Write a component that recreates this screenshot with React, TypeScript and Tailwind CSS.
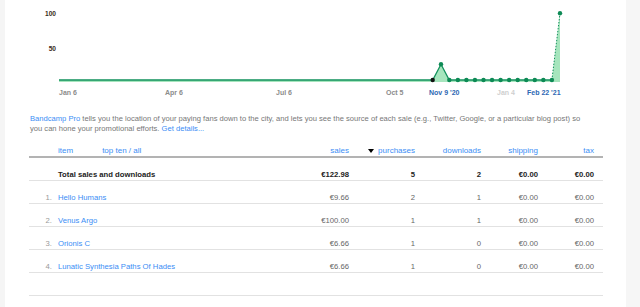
import React from 'react';

const rows = [
  { n: 1, name: 'Hello Humans', sales: '€9.66', purchases: '2', downloads: '1' },
  { n: 2, name: 'Venus Argo', sales: '€100.00', purchases: '1', downloads: '1' },
  { n: 3, name: 'Orionis C', sales: '€6.66', purchases: '1', downloads: '0' },
  { n: 4, name: 'Lunatic Synthesia Paths Of Hades', sales: '€6.66', purchases: '1', downloads: '0' },
];

const dotXs = Array.from({ length: 13 }, (_, i) => 449.3 + i * 8.55);

const Chart: React.FC = () => {
  const lastX = dotXs[dotXs.length - 1];
  return (
    <svg width="621" height="100" viewBox="5 0 621 100" className="block">
      <text x="56" y="15.5" textAnchor="end" fontSize="6.6" fontWeight="700" fill="#3a2a1a" fontFamily="Liberation Sans, Arial, sans-serif">100</text>
      <text x="56" y="50.5" textAnchor="end" fontSize="6.6" fontWeight="700" fill="#3a2a1a" fontFamily="Liberation Sans, Arial, sans-serif">50</text>

      {/* area */}
      <polygon
        points={`59,80 432.7,80 441,64.3 449.3,80 ${lastX},80 560,13.3 560,82 59,82`}
        fill="#a6e5bd"
      />
      {/* solid line */}
      <polyline
        points={`59,80 432.7,80 441,64.3 449.3,80 ${lastX},80`}
        fill="none"
        stroke="#12915c"
        strokeWidth="1.3"
      />
      {/* dashed last segment */}
      <line x1={lastX} y1="80" x2="560" y2="13.3" stroke="#12915c" strokeWidth="1" strokeDasharray="1.5 1.5" />

      <circle cx="432.7" cy="80" r="2.2" fill="#111" />
      <circle cx="441" cy="64.3" r="2.2" fill="#0d8a55" />
      {dotXs.map((x) => (
        <circle key={x} cx={x} cy="80" r="2.2" fill="#0d8a55" />
      ))}
      <circle cx="560" cy="13.3" r="2.2" fill="#0d8a55" />

      <g fontFamily="Liberation Sans, Arial, sans-serif" fontSize="7" fontWeight="700">
        <text x="59" y="94.5" fill="#8c8c8c">Jan 6</text>
        <text x="165" y="94.5" fill="#8c8c8c">Apr 6</text>
        <text x="276" y="94.5" fill="#8c8c8c">Jul 6</text>
        <text x="386" y="94.5" fill="#8c8c8c">Oct 5</text>
        <text x="429" y="94.5" fill="#2d67b3">Nov 9 '20</text>
        <text x="497" y="94.5" fill="#cfcfcf">Jan 4</text>
        <text x="527" y="94.5" fill="#2d67b3">Feb 22 '21</text>
      </g>
    </svg>
  );
};

const cols = 'grid grid-cols-[26px_245px_49px_66px_66px_57px_56px_9px]';

const App: React.FC = () => {
  return (
    <div className="flex w-[640px] h-[307px] bg-white font-['Liberation_Sans',Arial,sans-serif] overflow-hidden">
      <div className="w-[5px] bg-[#f5f5f5]" />

      <div className="flex-1">
        <Chart />

        {/* Pro blurb */}
        <p className="mt-[14px] ml-[25px] w-[564px] text-[7.6px] leading-[10px] text-[#777]">
          <a className="text-[#3b8ef5]">Bandcamp Pro</a> tells you the location of your paying fans down to the city, and lets you see the source of each sale (e.g., Twitter, Google, or a particular blog post) so you can hone your promotional efforts.{' '}
          <a className="text-[#3b8ef5]">Get details...</a>
        </p>

        {/* Table */}
        <div className="mt-[12px] ml-[24px] w-[574px]">
          <div className={`${cols} h-[12px] border-b-2 border-[#b3b3b3] text-[8px] leading-[10px] text-[#3b8ef5]`}>
            <div />
            <div className="pl-[3px] flex gap-[29px]">
              <span>item</span>
              <span>top ten / all</span>
            </div>
            <div className="text-right">sales</div>
            <div className="flex items-center justify-end gap-[4px]">
              <span className="inline-block w-0 h-0 border-l-[3px] border-r-[3px] border-t-[4px] border-l-transparent border-r-transparent border-t-black" />
              <span>purchases</span>
            </div>
            <div className="text-right">downloads</div>
            <div className="text-right">shipping</div>
            <div className="text-right">tax</div>
            <div />
          </div>

          <div className={`${cols} h-[23px] pt-[12px] border-b border-[#e2e2e2] text-[7.7px] leading-[10px] font-bold text-[#222]`}>
            <div />
            <div className="pl-[3px]">Total sales and downloads</div>
            <div className="text-right">€122.98</div>
            <div className="text-right">5</div>
            <div className="text-right">2</div>
            <div className="text-right">€0.00</div>
            <div className="text-right">€0.00</div>
            <div />
          </div>

          {rows.map((r) => (
            <div
              key={r.n}
              className={`${cols} h-[23px] pt-[12px] border-b border-[#e2e2e2] text-[7.7px] leading-[10px] text-[#666]`}
            >
              <div className="text-right pr-[3px] text-[#999]">{r.n}.</div>
              <div className="pl-[3px] text-[#3b8ef5]">{r.name}</div>
              <div className="text-right">{r.sales}</div>
              <div className="text-right">{r.purchases}</div>
              <div className="text-right">{r.downloads}</div>
              <div className="text-right">€0.00</div>
              <div className="text-right">€0.00</div>
              <div />
            </div>
          ))}

          <div className="h-[23px] border-b border-[#e2e2e2]" />
        </div>
      </div>

      <div className="w-[14px] bg-[#f6f6f6]" />
    </div>
  );
};

export default App;
